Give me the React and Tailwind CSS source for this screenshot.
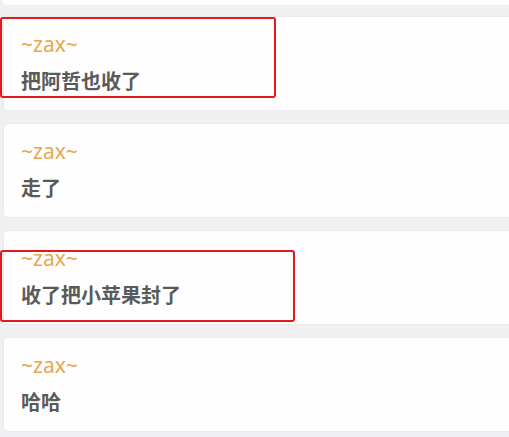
import React from "react";

const items = [
  { name: "~zax~", text: "把阿哲也收了" },
  { name: "~zax~", text: "走了" },
  { name: "~zax~", text: "收了把小苹果封了" },
  { name: "~zax~", text: "哈哈" },
];

export default function App() {
  return (
    <div
      className="relative w-[509px] h-[437px] overflow-hidden bg-[#f0f0f2]"
      style={{ fontFamily: '"Noto Sans", "Noto Sans CJK SC", sans-serif' }}
    >
      <div className="flex flex-col gap-[12px] pl-[3px]">
        <div className="h-[5px] -mb-[1px] w-[520px] bg-[#fdfdfe] rounded-b-[4px]" />
        {items.map((it, i) => (
          <div
            key={i}
            className="w-[520px] h-[95px] bg-[#fefefe] rounded-[5px] border border-[#ebebee] pl-[17px] pt-[13px] flex flex-col"
          >
            <div className="h-[28px] leading-[28px] text-[21px] text-[#e9a74c]">{it.name}</div>
            <div className="mt-[10px] h-[28px] leading-[28px] text-[20px] font-bold text-[#5a5a5a]">
              {it.text}
            </div>
          </div>
        ))}
      </div>
      <div className="absolute left-[0px] top-[17px] w-[276px] h-[81px] border-2 border-[#e21a1c] rounded-[3px]" />
      <div className="absolute left-[0px] top-[250px] w-[295px] h-[72px] border-2 border-[#e21a1c] rounded-[3px]" />
    </div>
  );
}
